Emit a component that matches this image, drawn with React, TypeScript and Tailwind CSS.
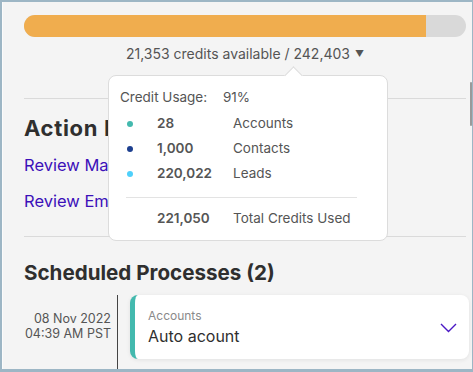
export default function App() {
  return (
    <div className="w-[473px] h-[372px] bg-[#9db6c5] pt-[2px] pl-[2px] pr-[1px] pb-[3px] font-['Inter',sans-serif]">
      <div className="relative h-full overflow-hidden border-l border-[#fbfbfb] bg-[#f4f4f4] pl-[21px] pr-[3px] pt-[13px]">
        {/* credits bar */}
        <div className="mr-[3px] h-[22px] overflow-hidden rounded-full bg-[#d9d9d9]">
          <div className="h-full w-[91%] bg-[#f0ad4e]" />
        </div>
        <div className="mr-[3px] mt-[6px] flex h-5 items-center justify-center gap-[5px] text-[14px] text-[#555]">
          <span>21,353 credits available / 242,403</span>
          <span className="text-[9px] leading-none">▼</span>
        </div>

        <div className="mr-[3px] mt-[35px] h-px bg-[#dadada]" />

        <h2 className="mt-[15px] text-[22px] font-bold leading-[28px] tracking-[0.03em] text-[#2f2f2f]">Action Items (2)</h2>
        <div className="mt-[11px] text-[16.5px] leading-6 text-[#3c10b9]">Review Matched Records</div>
        <div className="mt-[12px] text-[16.5px] leading-6 text-[#3c10b9]">Review Email Settings</div>

        <div className="mr-[3px] mt-[23px] h-px bg-[#dadada]" />

        <h2 className="mt-[22px] text-[20.6px] font-bold leading-[28px] text-[#2f2f2f]">Scheduled Processes (2)</h2>

        {/* timeline */}
        <div className="mt-[8px] flex h-[120px] items-start">
          <div className="w-[87px] whitespace-nowrap pt-[16px] text-right text-[12.5px] leading-[15px] text-[#555]">
            <div>08 Nov 2022</div>
            <div>04:39 AM PST</div>
          </div>
          <div className="ml-[6px] h-full w-px bg-[#444]" />
          <div className="ml-[12px] flex h-[64px] flex-1 items-center rounded-lg border-l-[5px] border-[#43b9ae] bg-white pl-[13px] pr-[12px] shadow-[0_1px_4px_rgba(0,0,0,0.08)]">
            <div className="flex-1">
              <div className="text-[12px] leading-4 text-[#8a8a8a]">Accounts</div>
              <div className="mt-[1px] text-[16px] leading-[22px] text-[#2f2f2f]">Auto acount</div>
            </div>
            <svg width="17" height="10" viewBox="0 0 17 10" fill="none" className="mt-[2px]">
              <path d="M1 1l7.5 7.5L16 1" stroke="#4a18c4" strokeWidth="1.4" />
            </svg>
          </div>
        </div>

        {/* scrollbar thumb */}
        <div className="absolute right-0 top-[80px] h-[44px] w-[2px] rounded-full bg-[#9a9a9a]" />

        {/* credit usage popover */}
        <div className="absolute left-[105px] top-[73px] w-[280px] rounded-lg border border-[#dcdcdc] bg-white pl-[11px] pr-3 pt-[11px] pb-[12px] text-[13.5px] text-[#555]">
          <div className="absolute -top-[7px] left-[178px] h-[13px] w-[13px] rotate-45 border-l border-t border-[#dcdcdc] bg-white" />
          <div className="flex h-5 items-center">
            <span className="w-[103px]">Credit Usage:</span>
            <span>91%</span>
          </div>
          <div className="mt-[4px] pl-[6px]">
            {[
              { c: "bg-[#43b9ae]", n: "28", l: "Accounts" },
              { c: "bg-[#1d3f8f]", n: "1,000", l: "Contacts" },
              { c: "bg-[#4fd0fb]", n: "220,022", l: "Leads" },
            ].map((r) => (
              <div key={r.l} className="grid h-[25px] grid-cols-[31px_76px_1fr] items-center">
                <span className={`ml-[1px] h-[6px] w-[6px] rounded-full ${r.c}`} />
                <span className="font-semibold">{r.n}</span>
                <span>{r.l}</span>
              </div>
            ))}
            <div className="mt-[11px] mr-[18px] h-px bg-[#e3e3e3]" />
            <div className="mt-[10px] grid h-5 grid-cols-[31px_76px_1fr] items-center">
              <span />
              <span className="font-semibold">221,050</span>
              <span>Total Credits Used</span>
            </div>
          </div>
        </div>
      </div>
    </div>
  );
}
